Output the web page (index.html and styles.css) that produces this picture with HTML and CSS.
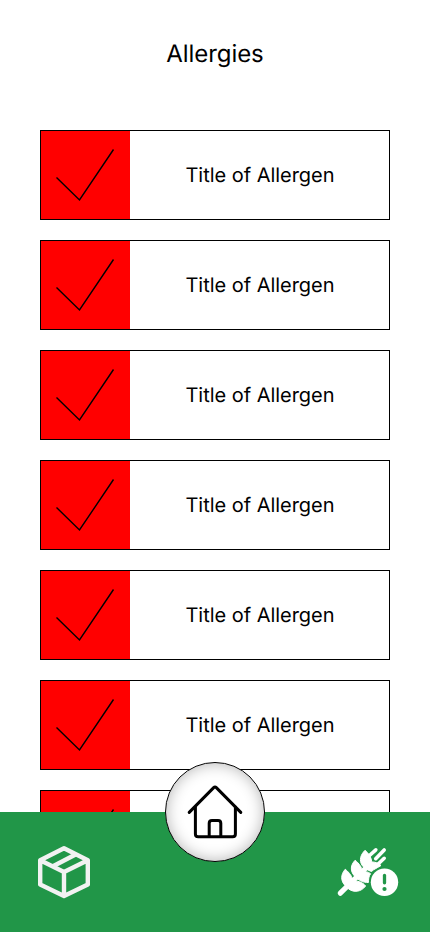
FILE: index.html
```html
<!DOCTYPE html>
<html lang="en">
<head>
<meta charset="utf-8">
<meta name="viewport" content="width=device-width, initial-scale=1">
<title>Allergies</title>
<link rel="stylesheet" href="styles.css">
</head>
<body>
<svg class="sprite" aria-hidden="true">
  <symbol id="check" viewBox="0 0 89 88"><path d="M15.5 46.5 38.5 69 72.5 18.5" fill="none" stroke="#000" stroke-width="1.4"/></symbol>
</svg>
<div class="screen">
  <h1 class="title">Allergies</h1>
  <main class="list">
    <div class="card"><svg class="mark"><use href="#check"/></svg><span class="label">Title of Allergen</span></div>
    <div class="card"><svg class="mark"><use href="#check"/></svg><span class="label">Title of Allergen</span></div>
    <div class="card"><svg class="mark"><use href="#check"/></svg><span class="label">Title of Allergen</span></div>
    <div class="card"><svg class="mark"><use href="#check"/></svg><span class="label">Title of Allergen</span></div>
    <div class="card"><svg class="mark"><use href="#check"/></svg><span class="label">Title of Allergen</span></div>
    <div class="card"><svg class="mark"><use href="#check"/></svg><span class="label">Title of Allergen</span></div>
    <div class="card"><svg class="mark"><use href="#check"/></svg></div>
  </main>
  <nav class="bar">
    <a class="item" aria-label="Products">
      <svg width="80" height="75" viewBox="0 0 80 75" fill="none" stroke="#f2f2f2" stroke-width="4.4" stroke-linejoin="round">
        <path d="M39 13.2 62.8 25.3V49.5L39 61 15.2 49.5V25.3ZM15.2 25.3 39 37 62.8 25.3M39 37V61"/>
        <path d="M27.5 31.5 51.5 19"/>
      </svg>
    </a>
    <a class="home" aria-label="Home">
      <svg width="60" height="60" viewBox="0 0 60 60" fill="none" stroke="#000" stroke-width="3" stroke-linecap="round" stroke-linejoin="round">
        <path d="M4.2 30.4 28.7 5.6Q30 4.3 31.3 5.6L55.8 30.4"/>
        <path d="M10.4 25V52Q10.4 54.8 13.2 54.8H47.6Q50.4 54.8 50.4 52V25"/>
        <path d="M24.2 54V41.3Q24.2 38.5 27 38.5H33Q35.8 38.5 35.8 41.3V54"/>
      </svg>
    </a>
    <a class="item" aria-label="Allergies">
      <svg width="90" height="75" viewBox="0 0 90 75" fill="#fff">
        <path d="M15.3 58.2 44 30" fill="none" stroke="#fff" stroke-width="5.2" stroke-linecap="round"/>
        <g stroke="#fff" stroke-width="1" stroke-linejoin="round">
          <path d="M20.3 34.2C24.5 38 27.5 41.3 27.6 46.3C32 45.3 37.5 47 40.6 51C36 57 29 58 23.3 53.7L20.3 50.7C15.5 46 15.5 39.5 20.3 34.2Z"/>
          <path d="M30.2 25.2C34.4 29 37 32 37.2 37C40.5 36.2 43 36.7 45.6 38.7C43.6 41.3 43.5 44.5 43.4 47.5C38.5 47.7 33.3 45.5 29.5 41C25 36 25.4 30 30.2 25.2Z"/>
          <path d="M40 15.3C43.5 18.3 46.3 21.8 46.8 27C50 26.9 53.5 27.9 56 30.5C53.5 32.2 51 33.3 48.6 34.8L46.5 36.5C42.5 35.1 39 33.2 37 30.2C34 25 35.5 19.8 40 15.3Z"/>
        </g>
        <path d="M44.5 20.5 50.8 14.8M50.7 23.7 59.2 15M51 31 59.2 23.3" fill="none" stroke="#fff" stroke-width="3.6" stroke-linecap="round"/>
        <circle cx="59.5" cy="47.3" r="13.7"/>
        <path d="M59.5 40.5V47.8" fill="none" stroke="#219648" stroke-width="3.3" stroke-linecap="round"/>
        <circle cx="59.5" cy="54" r="2.1" fill="#219648"/>
      </svg>
    </a>
  </nav>
</div>
</body>
</html>
```
FILE: styles.css
```css
* { box-sizing: border-box; }
body { margin: 0; background: #fff; color: #000; font-family: Inter, sans-serif; text-rendering: geometricPrecision; }
.sprite { position: absolute; width: 0; height: 0; }
.screen { height: 932px; display: flex; flex-direction: column; overflow: hidden; }
.title { flex: none; margin: 0; padding-top: 39px; height: 130px; font-size: 24px; line-height: 29px; font-weight: 400; letter-spacing: -.08px; text-align: center; }
.list { flex: 1; min-height: 0; overflow: hidden; display: flex; flex-direction: column; gap: 20px; padding: 0 40px; }
.card { flex: none; height: 90px; display: flex; border: 1px solid #000; background: #fff; }
.mark { flex: none; width: 89px; height: 88px; background: #f00; }
.label { flex: 1; align-self: center; padding-left: 1px; text-align: center; font-size: 20px; line-height: 24px; letter-spacing: -.03px; }
.bar { position: relative; flex: none; height: 120px; padding: 23px 15px 0 25px; display: flex; justify-content: space-between; background: #219648; }
.item svg { display: block; }
.home { position: absolute; left: 165px; top: -50px; width: 100px; height: 100px; display: flex; align-items: center; justify-content: center; border: 1px solid #000; border-radius: 50%; background: #fff; box-shadow: inset 0 0 15px rgba(0, 0, 0, .3); }
```
